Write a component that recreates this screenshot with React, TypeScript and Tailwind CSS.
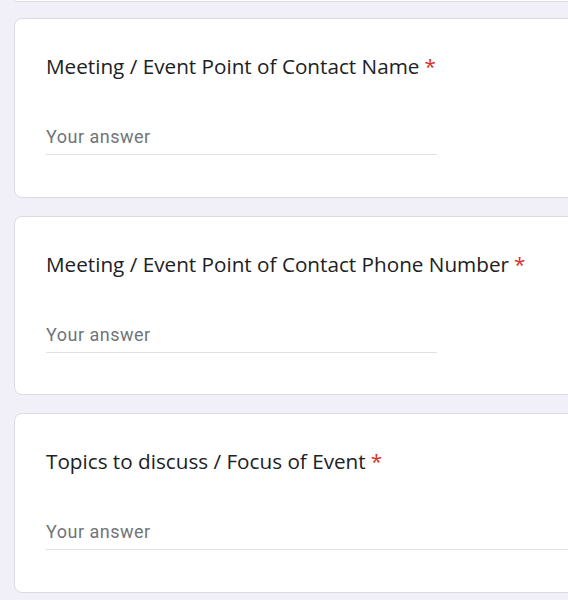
const questions = [
  { title: "Meeting / Event Point of Contact Name", wide: false },
  { title: "Meeting / Event Point of Contact Phone Number", wide: false },
  { title: "Topics to discuss / Focus of Event", wide: true },
];

function QuestionCard({ title, wide }: { title: string; wide: boolean }) {
  return (
    <div className="w-[640px] bg-white border border-[#dadce0] rounded-lg pl-[31px] pt-[35px] pb-[41.5px]">
      <div className="text-[20.7px] leading-[24px] h-[24px] text-[#202124] font-['Open_Sans',sans-serif]">
        {title}
        <span className="text-[#d93025] ml-[5px]">*</span>
      </div>
      <div
        className={
          "mt-[47px] pb-[5px] border-b border-[#e0e0e0] " +
          (wide ? "w-full" : "w-[391px]")
        }
      >
        <input
          className="block w-full h-[24px] outline-none text-[18px] tracking-[0.5px] leading-[24px] text-[#202124] placeholder:text-[#70757a] font-['Roboto',sans-serif] bg-transparent"
          placeholder="Your answer"
        />
      </div>
    </div>
  );
}

export default function App() {
  return (
    <div className="min-h-[600px] h-[600px] overflow-hidden bg-[#f1f0f9] pl-[14px]">
      <div className="w-[640px] h-[2px] bg-white border-b border-x border-[#dadce0] rounded-b-lg" />
      <div className="flex flex-col gap-[18px] pt-[16px]">
        {questions.map((q) => (
          <QuestionCard key={q.title} title={q.title} wide={q.wide} />
        ))}
      </div>
    </div>
  );
}
